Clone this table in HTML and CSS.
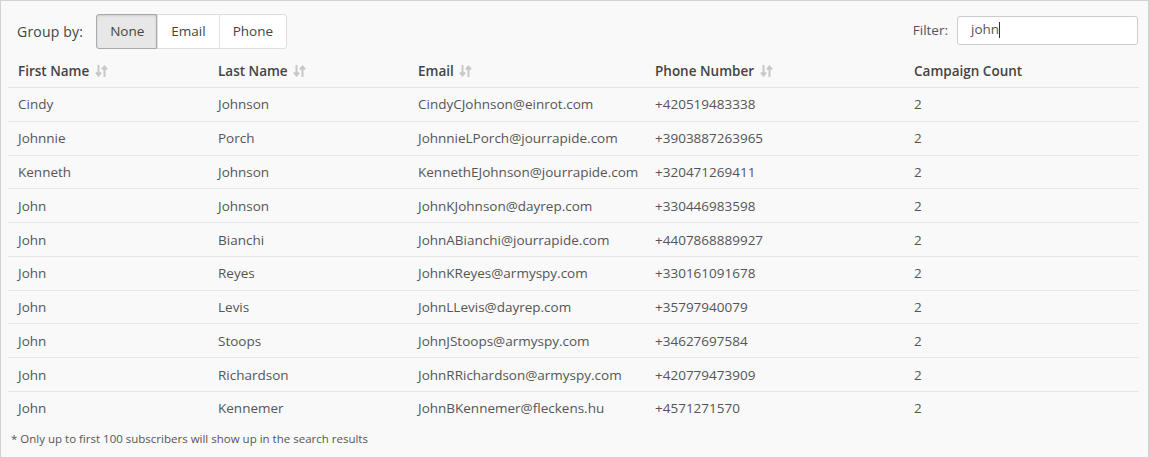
FILE: index.html
```html
<!DOCTYPE html>
<html lang="en">
<head>
	<meta charset="UTF-8">
	<title>Subscribers</title>
	<link rel="stylesheet" href="styles.css">
</head>
<body>
	<div class="panel">
		<div class="toolbar">
			<div class="group">
				<span class="label">Group by:</span>
				<div class="btns">
					<a href="javascript:;" class="active">None</a>
					<a href="javascript:;">Email</a>
					<a href="javascript:;">Phone</a>
				</div>
			</div>
			<div class="filter">
				<span class="label">Filter:</span>
				<div class="input">john<span class="caret"></span></div>
			</div>
		</div>
		<table>
			<thead>
				<tr>
					<th class="c1">First Name <svg class="sort" width="13" height="14" viewBox="0 0 13 14"><path d="M3.5 1v10M1 8.5l2.5 3 2.5-3M9.5 13V3M7 5.5l2.5-3 2.5 3" fill="none" stroke="#c8c8c8" stroke-width="2"/></svg></th>
					<th class="c2">Last Name <svg class="sort" width="13" height="14" viewBox="0 0 13 14"><path d="M3.5 1v10M1 8.5l2.5 3 2.5-3M9.5 13V3M7 5.5l2.5-3 2.5 3" fill="none" stroke="#c8c8c8" stroke-width="2"/></svg></th>
					<th class="c3">Email <svg class="sort" width="13" height="14" viewBox="0 0 13 14"><path d="M3.5 1v10M1 8.5l2.5 3 2.5-3M9.5 13V3M7 5.5l2.5-3 2.5 3" fill="none" stroke="#c8c8c8" stroke-width="2"/></svg></th>
					<th class="c4">Phone Number <svg class="sort" width="13" height="14" viewBox="0 0 13 14"><path d="M3.5 1v10M1 8.5l2.5 3 2.5-3M9.5 13V3M7 5.5l2.5-3 2.5 3" fill="none" stroke="#c8c8c8" stroke-width="2"/></svg></th>
					<th>Campaign Count</th>
				</tr>
			</thead>
			<tbody>
				<tr><td>Cindy</td><td>Johnson</td><td>CindyCJohnson@einrot.com</td><td>+420519483338</td><td>2</td></tr>
				<tr><td>Johnnie</td><td>Porch</td><td>JohnnieLPorch@jourrapide.com</td><td>+3903887263965</td><td>2</td></tr>
				<tr><td>Kenneth</td><td>Johnson</td><td>KennethEJohnson@jourrapide.com</td><td>+320471269411</td><td>2</td></tr>
				<tr><td>John</td><td>Johnson</td><td>JohnKJohnson@dayrep.com</td><td>+330446983598</td><td>2</td></tr>
				<tr><td>John</td><td>Bianchi</td><td>JohnABianchi@jourrapide.com</td><td>+4407868889927</td><td>2</td></tr>
				<tr><td>John</td><td>Reyes</td><td>JohnKReyes@armyspy.com</td><td>+330161091678</td><td>2</td></tr>
				<tr><td>John</td><td>Levis</td><td>JohnLLevis@dayrep.com</td><td>+35797940079</td><td>2</td></tr>
				<tr><td>John</td><td>Stoops</td><td>JohnJStoops@armyspy.com</td><td>+34627697584</td><td>2</td></tr>
				<tr><td>John</td><td>Richardson</td><td>JohnRRichardson@armyspy.com</td><td>+420779473909</td><td>2</td></tr>
				<tr><td>John</td><td>Kennemer</td><td>JohnBKennemer@fleckens.hu</td><td>+4571271570</td><td>2</td></tr>
			</tbody>
		</table>
		<p class="note">* Only up to first 100 subscribers will show up in the search results</p>
	</div>
</body>
</html>
```

FILE: styles.css
```css
* {
	margin: 0;
	padding: 0;
	box-sizing: border-box;
}
html, body {
	width: 1149px;
	height: 458px;
	background: #fff;
}
body {
	font-family: "Open Sans", "Liberation Sans", sans-serif;
	font-size: 13.5px;
	color: #555;
}
a {
	text-decoration: none;
	color: #555;
}
.panel {
	width: 1149px;
	height: 458px;
	border: 1px solid #d2d2d2;
	background: #f9f9f9;
	padding: 13px 10px 0 7px;
}
.toolbar {
	display: flex;
	justify-content: space-between;
	align-items: flex-start;
	height: 40px;
}
.group {
	display: flex;
	align-items: center;
}
.group .label {
	font-size: 14px;
	letter-spacing: 0.2px;
	color: #444;
	padding: 0 13px 0 9px;
}
.btns {
	display: flex;
	height: 35px;
	border: 1px solid #ddd;
	border-radius: 3px;
	background: #fff;
}
.btns a {
	display: flex;
	align-items: center;
	padding: 0 13px 2px;
	border-left: 1px solid #e2e2e2;
	color: #444;
}
.btns a:first-child {
	border-left: 0;
	border-radius: 2px 0 0 2px;
}
.btns a.active {
	background: #e7e7e7;
	box-shadow: inset 0 1px 2px rgba(0,0,0,.12);
	border: 1px solid #aaa;
	margin: -1px 0 -1px -1px;
	border-radius: 3px 0 0 3px;
	padding: 0 12px 2px 13px;
}
.filter {
	display: flex;
	align-items: center;
	margin-top: 2px;
}
.filter .label {
	color: #555;
	padding: 0 9px 2px 0;
}
.input {
	width: 181px;
	height: 29px;
	border: 1px solid #ccc;
	border-radius: 3px;
	background: #fff;
	padding: 0 13px 2px;
	line-height: 19px;
	color: #555;
	display: flex;
	align-items: center;
}
.caret {
	display: inline-block;
	width: 1px;
	height: 16px;
	background: #333;
}
table {
	width: 1131px;
	border-collapse: collapse;
	table-layout: fixed;
}
th, td {
	text-align: left;
	padding: 6.4px 10px;
	line-height: 20px;
	white-space: nowrap;
	overflow: visible;
}
th {
	font-weight: 600;
	color: #444;
	padding-top: 7px;
	padding-bottom: 6px;
}
thead tr {
	border-bottom: 1px solid #e3e3e3;
}
tbody tr {
	border-bottom: 1px solid #e6e6e6;
}
tbody tr:last-child {
	border-bottom: 0;
}
.c1, .c2 {
	width: 200px;
}
.c3 {
	width: 237px;
}
.c4 {
	width: 259px;
}
.sort {
	vertical-align: -2px;
	margin-left: 2px;
}
.note {
	font-size: 11.5px;
	color: #555;
	padding: 6px 0 0 3px;
}
```
